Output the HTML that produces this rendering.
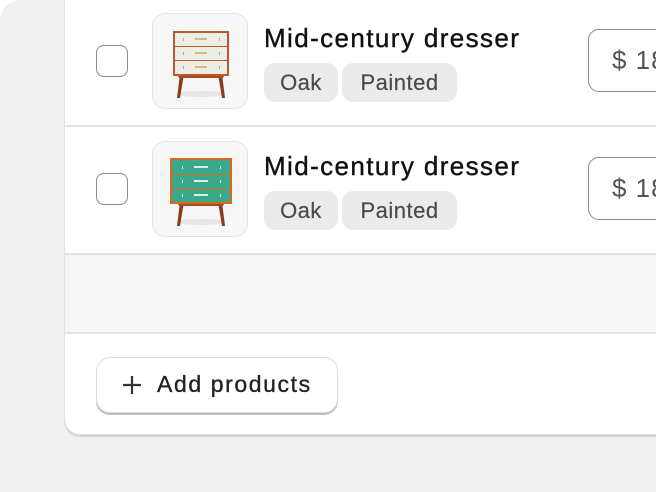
<!DOCTYPE html>
<html><head><meta charset="utf-8"><style>
*{margin:0;padding:0;box-sizing:border-box}
html,body{width:656px;height:492px;overflow:hidden;background:#fff}
body{position:relative;font-family:"Liberation Sans",sans-serif}
.bg{position:absolute;left:0;top:0;width:656px;height:492px;background:#f1f1f1;border-top-left-radius:20px}
.card{position:absolute;left:64px;top:-20px;width:620px;height:455px;background:#fff;border:1.5px solid #e0e0e0;border-radius:16px;box-shadow:0 2px 0 #d4d4d4;overflow:hidden}
.div{position:absolute;left:0;width:100%;height:2px;background:#e3e3e3}
.cb{position:absolute;left:31px;width:32px;height:32px;border:1.5px solid #8a8a8a;border-radius:8px;background:#fff}
.th{position:absolute;left:87px;width:96px;height:96px;border:1.5px solid #e3e3e3;border-radius:13px;background:#f7f7f7;overflow:hidden}
.title{position:absolute;left:199px;font-size:26px;color:#111;letter-spacing:1.4px;-webkit-text-stroke:0.4px #111;white-space:nowrap}
.tag{position:absolute;height:39px;border-radius:11px;background:#ebebeb;color:#4a4a4a;font-size:22px;line-height:39px;text-align:center;letter-spacing:0.5px;-webkit-text-stroke:0.2px #4a4a4a}
.price{position:absolute;left:523px;width:120px;height:63px;border:1.5px solid #8a8a8a;border-radius:11px;font-size:26px;color:#555;padding-left:23px;line-height:60px;letter-spacing:1px}
.gray{position:absolute;left:0;top:274px;width:100%;height:78px;background:#f6f6f6}
.btn{position:absolute;left:31px;top:376px;width:242px;height:56px;border:1.5px solid #dcdcdc;border-radius:14px;box-shadow:0 2px 0 #bdbdbd;background:#fff;font-size:23px;color:#222;line-height:53px;padding-left:60px;letter-spacing:1.6px;-webkit-text-stroke:0.35px #222;white-space:nowrap}
.btn svg{position:absolute;left:25px;top:17px}
</style></head><body>
<div class="bg"></div>
<div class="card">
  <div class="cb" style="top:64px"></div>
  <div class="th" style="top:32px">
    <svg width="96" height="96" viewBox="0 0 96 96">
      <ellipse cx="48" cy="80" rx="26" ry="3" fill="#e6e6e6"/>
      <path d="M27 60 L24 84 L27 84 L31 60Z" fill="#8b3b1c"/>
      <path d="M69 60 L72 84 L69 84 L65 60Z" fill="#8b3b1c"/>
      <path d="M24 60 L72 60 L70 64 L26 64Z" fill="#a64b22"/>
      <rect x="20" y="17" width="56" height="45" fill="#b85a2a"/>
      <rect x="22" y="19" width="52" height="13" fill="#eeeee8"/>
      <rect x="22" y="33" width="52" height="13" fill="#eeeee8"/>
      <rect x="22" y="47" width="52" height="13" fill="#eeeee8"/>
      <rect x="42" y="24" width="12" height="2" fill="#d8b878"/>
      <rect x="42" y="38" width="12" height="2" fill="#d8b878"/>
      <rect x="42" y="52" width="12" height="2" fill="#d8b878"/>
      <g fill="#c9a868"><rect x="30" y="24" width="1" height="3"/><rect x="66" y="24" width="1" height="3"/><rect x="30" y="38" width="1" height="3"/><rect x="66" y="38" width="1" height="3"/><rect x="30" y="52" width="1" height="3"/><rect x="66" y="52" width="1" height="3"/></g>
    </svg>
  </div>
  <div class="title" style="top:42px">Mid-century dresser</div>
  <div class="tag" style="top:82px;left:199px;width:74px">Oak</div>
  <div class="tag" style="top:82px;left:277px;width:115px">Painted</div>
  <div class="price" style="top:48px">$ 18</div>
  <div class="div" style="top:144px"></div>

  <div class="cb" style="top:192px"></div>
  <div class="th" style="top:160px">
    <svg width="96" height="96" viewBox="0 0 96 96">
      <ellipse cx="48" cy="80" rx="26" ry="3" fill="#e6e6e6"/>
      <path d="M27 60 L24 84 L27 84 L31 60Z" fill="#8b3b1c"/>
      <path d="M69 60 L72 84 L69 84 L65 60Z" fill="#8b3b1c"/>
      <path d="M24 60 L72 60 L70 64 L26 64Z" fill="#a64b22"/>
      <rect x="17" y="16" width="62" height="46" fill="#d9681f"/>
      <rect x="19" y="18" width="58" height="14" fill="#3aa98a"/>
      <rect x="19" y="33" width="58" height="13" fill="#3aa98a"/>
      <rect x="19" y="47" width="58" height="13" fill="#3aa98a"/>
      <rect x="41" y="24" width="14" height="2" fill="#d8f0e8"/>
      <rect x="41" y="38" width="14" height="2" fill="#d8f0e8"/>
      <rect x="41" y="52" width="14" height="2" fill="#d8f0e8"/>
      <g fill="#e0f4ee"><rect x="29" y="24" width="1" height="3"/><rect x="67" y="24" width="1" height="3"/><rect x="29" y="38" width="1" height="3"/><rect x="67" y="38" width="1" height="3"/><rect x="29" y="52" width="1" height="3"/><rect x="67" y="52" width="1" height="3"/></g>
    </svg>
  </div>
  <div class="title" style="top:170px">Mid-century dresser</div>
  <div class="tag" style="top:210px;left:199px;width:74px">Oak</div>
  <div class="tag" style="top:210px;left:277px;width:115px">Painted</div>
  <div class="price" style="top:176px">$ 18</div>
  <div class="div" style="top:272px"></div>
  <div class="gray"></div>
  <div class="div" style="top:351px"></div>
  <div class="btn"><svg width="20" height="20" viewBox="0 0 20 20"><path d="M10 1V19M1 10H19" stroke="#333" stroke-width="2.2"/></svg>Add products</div>
</div>
</body></html>
